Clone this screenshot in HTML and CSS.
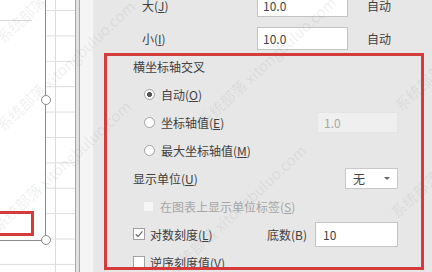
FILE: index.html
```html
<!DOCTYPE html>
<html lang="zh-CN">
<head>
    <meta charset="UTF-8">
    <meta name="viewport" content="width=device-width, initial-scale=1.0">
    <title>设置坐标轴格式</title>

    <link rel="stylesheet" href="styles.css">
</head>
<body>

    <div class="screen">
        <!-- 工作表和图表 -->
        <div class="sheet">
            <div class="chart">
                <div class="chart-line"></div>
                <div class="mark-box"></div>
            </div>
            <span class="handle handle-mid"></span>
            <span class="handle handle-corner"></span>
        </div>
        <div class="splitter"></div>
        <div class="gutter"></div>

        <!-- 设置窗格 -->
        <div class="panel">
            <div class="panel-inner">
                <div class="size-row first">
                    <span class="size-label">大(<u>J</u>)</span>
                    <span class="field size-field">10.0</span>
                    <span class="auto">自动</span>
                </div>
                <div class="size-row">
                    <span class="size-label">小(<u>I</u>)</span>
                    <span class="field size-field">10.0</span>
                    <span class="auto">自动</span>
                </div>

                <div class="group">
                    <div class="g-title">横坐标轴交叉</div>

                    <div class="g-row radio-row">
                        <span class="radio on"></span>
                        <span>自动(<u>O</u>)</span>
                    </div>
                    <div class="g-row radio-row">
                        <span class="radio"></span>
                        <span>坐标轴值(<u>E</u>)</span>
                        <span class="field ghost-field">1.0</span>
                    </div>
                    <div class="g-row radio-row">
                        <span class="radio"></span>
                        <span>最大坐标轴值(<u>M</u>)</span>
                    </div>

                    <div class="g-row unit-row">
                        <span>显示单位(<u>U</u>)</span>
                        <span class="field select">无<span class="caret"></span></span>
                    </div>

                    <div class="g-row sub-check-row">
                        <span class="check disabled"></span>
                        <span class="muted">在图表上显示单位标签(<u>S</u>)</span>
                    </div>

                    <div class="g-row check-row">
                        <span class="check">
                            <svg width="10" height="10" viewBox="0 0 10 10"><polyline points="1.8,5.2 4,7.6 8.4,2.4" fill="none" stroke="#6a6a6a" stroke-width="1.3"/></svg>
                        </span>
                        <span>对数刻度(<u>L</u>)</span>
                        <span class="base-label">底数(B)</span>
                        <span class="field base-field">10</span>
                    </div>

                    <div class="g-row check-row">
                        <span class="check"></span>
                        <span>逆序刻度值(<u>V</u>)</span>
                    </div>
                </div>
            </div>
        </div>

        <!-- 水印 -->
        <span class="wm" style="left:4px; top:30px;">系统部落 xitongbuluo.com</span>
        <span class="wm" style="left:4px; top:118px;">系统部落 xitongbuluo.com</span>
        <span class="wm" style="left:0px; top:218px;">系统部落 xitongbuluo.com</span>
        <span class="wm" style="left:205px; top:114px;">系统部落 xitongbuluo.com</span>
        <span class="wm" style="left:175px; top:262px;">系统部落 xitongbuluo.com</span>
        <span class="wm" style="left:402px; top:98px;">系统部落 xitongbuluo.com</span>
        <span class="wm" style="left:398px; top:205px;">系统部落 xitongbuluo.com</span>
    </div>

</body>
</html>
```

FILE: styles.css
```css
body {
    margin: 0;
    font-family: "Noto Sans CJK SC", "Noto Sans", sans-serif;
    font-size: 12px;
    color: #404040;
}

u {
    text-underline-offset: 1px;
}

.screen {
    position: relative;
    width: 432px;
    height: 272px;
    overflow: hidden;
    display: flex;
    background-color: #fff;
}

/* 工作表 */
.sheet {
    position: relative;
    width: 75px;
    background-color: #fff;
    background-image:
        linear-gradient(to right, transparent 55px, #dcdcdc 55px, #dcdcdc 56px, transparent 56px),
        linear-gradient(to bottom, #dcdcdc 1px, transparent 1px);
    background-size: 100% 100%, 100% 25.4px;
    background-position: 0 0, 0 10px;
}

.chart {
    position: absolute;
    left: 0;
    top: 0;
    width: 45px;
    height: 240px;
    background-color: #fff;
    border-right: 1px solid #8c8c8c;
    border-bottom: 1px solid #8c8c8c;
}

.chart-line {
    position: absolute;
    left: 0;
    top: 20px;
    width: 32px;
    height: 1px;
    background-color: #d9d9d9;
}

.mark-box {
    position: absolute;
    left: -6px;
    top: 211px;
    width: 40px;
    height: 25px;
    box-sizing: border-box;
    border: 3px solid #d63b3b;
}

.handle {
    position: absolute;
    left: 41px;
    width: 10px;
    height: 10px;
    box-sizing: border-box;
    border: 1.5px solid #8a8a8a;
    border-radius: 50%;
    background-color: #fff;
}

.handle-mid {
    top: 95px;
}

.handle-corner {
    top: 235px;
}

.splitter {
    width: 3px;
    border-left: 1px solid #a8a8a8;
    border-right: 1px solid #a8a8a8;
    background-color: #e2e2e2;
}

.gutter {
    width: 13px;
    background-color: #f5f5f5;
}

/* 设置窗格 */
.panel {
    flex: 1;
    background-color: #e7e7e7;
    padding-left: 11px;
}

.panel-inner {
    margin-top: -11px;
}

.size-row {
    display: flex;
    align-items: center;
    height: 34px;
    padding-left: 38px;
}

.size-row.first {
    height: 32px;
}

.size-label {
    width: 115px;
}

.field {
    box-sizing: border-box;
    display: flex;
    align-items: center;
    background-color: #fff;
    border: 1px solid #c4c4c4;
    color: #444;
}

.size-field {
    width: 91px;
    height: 23px;
    padding-left: 5px;
}

.auto {
    margin-left: 19px;
}

.group {
    position: relative;
    width: 320px;
    height: 217px;
    margin-top: -2px;
    overflow: hidden;
}

.group::after {
    content: "";
    position: absolute;
    inset: 0;
    border: 3px solid #d63b3b;
}

.g-title {
    display: flex;
    align-items: center;
    height: 27px;
    padding-left: 29px;
}

.g-row {
    display: flex;
    align-items: center;
    height: 28px;
    padding-right: 26px;
}

.radio-row {
    padding-left: 40px;
}

.radio {
    width: 11px;
    height: 11px;
    box-sizing: border-box;
    margin-right: 6px;
    border: 1px solid #a2a2a2;
    border-radius: 50%;
    background-color: #fff;
}

.radio.on {
    background: radial-gradient(circle, #555 0 2.2px, #fff 2.8px);
}

.ghost-field {
    width: 81px;
    height: 21px;
    margin-left: auto;
    padding-left: 6px;
    background-color: #efefef;
    border-color: #e4e4e4;
    color: #a8a8a8;
}

.unit-row {
    padding-left: 29px;
}

.select {
    width: 53px;
    height: 21px;
    margin-left: auto;
    padding-left: 7px;
    border-color: #c8c8c8;
}

.caret {
    margin-left: auto;
    margin-right: 7px;
    border-left: 3px solid transparent;
    border-right: 3px solid transparent;
    border-top: 3px solid #666;
}

.sub-check-row {
    padding-left: 39px;
}

.check-row {
    padding-left: 29px;
}

.check {
    display: flex;
    align-items: center;
    justify-content: center;
    width: 12px;
    height: 12px;
    box-sizing: border-box;
    margin-right: 5px;
    border: 1px solid #a0a0a0;
    background-color: #fff;
}

.check.disabled {
    width: 11px;
    height: 11px;
    margin-right: 6px;
    border-color: #e6e6e6;
    background-color: #f6f6f6;
}

.muted {
    color: #a6a6a6;
}

.base-label {
    margin-left: auto;
}

.base-field {
    width: 83px;
    height: 25px;
    margin-left: 8px;
    padding-left: 7px;
}

/* 水印 */
.wm {
    position: absolute;
    transform-origin: 0 100%;
    transform: rotate(-43deg);
    font-size: 15px;
    line-height: 15px;
    white-space: nowrap;
    color: rgba(120, 120, 120, 0.12);
    pointer-events: none;
}
```
